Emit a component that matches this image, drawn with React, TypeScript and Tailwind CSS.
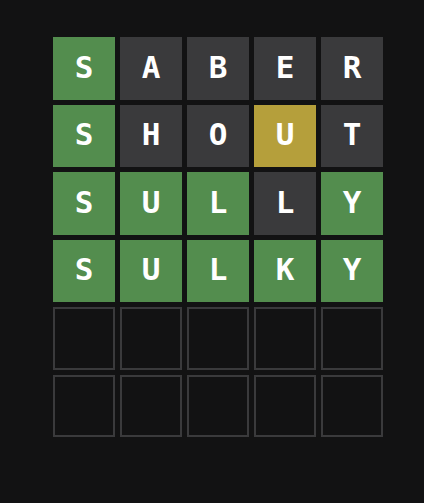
import React from "react";

type State = "correct" | "present" | "absent" | "empty";

const ROWS: { letters: string; states: State[] }[] = [
  { letters: "SABER", states: ["correct", "absent", "absent", "absent", "absent"] },
  { letters: "SHOUT", states: ["correct", "absent", "absent", "present", "absent"] },
  { letters: "SULLY", states: ["correct", "correct", "correct", "absent", "correct"] },
  { letters: "SULKY", states: ["correct", "correct", "correct", "correct", "correct"] },
  { letters: "", states: ["empty", "empty", "empty", "empty", "empty"] },
  { letters: "", states: ["empty", "empty", "empty", "empty", "empty"] },
];

const tileClass: Record<State, string> = {
  correct: "bg-[#538d4e]",
  present: "bg-[#b59f3b]",
  absent: "bg-[#3a3a3c]",
  empty: "border-2 border-[#3a3a3c]",
};

const Tile = ({ letter, state }: { letter: string; state: State }) => (
  <div
    className={`flex items-center justify-center pb-[2px] text-[31px] font-bold text-white uppercase leading-none ${tileClass[state]}`}
  >
    {letter}
  </div>
);

export default function App() {
  return (
    <div
      className="h-[503px] w-full bg-[#121213] overflow-hidden"
      style={{ fontFamily: '"DejaVu Sans Mono", monospace' }}
    >
      <div className="ml-[43px] mt-[27px] w-[350px] h-[420px] p-[10px] grid grid-rows-6 gap-[5px]">
        {ROWS.map((row, r) => (
          <div key={r} className="grid grid-cols-5 gap-[5px]">
            {row.states.map((s, i) => (
              <Tile key={i} letter={row.letters[i] || ""} state={s} />
            ))}
          </div>
        ))}
      </div>
    </div>
  );
}
